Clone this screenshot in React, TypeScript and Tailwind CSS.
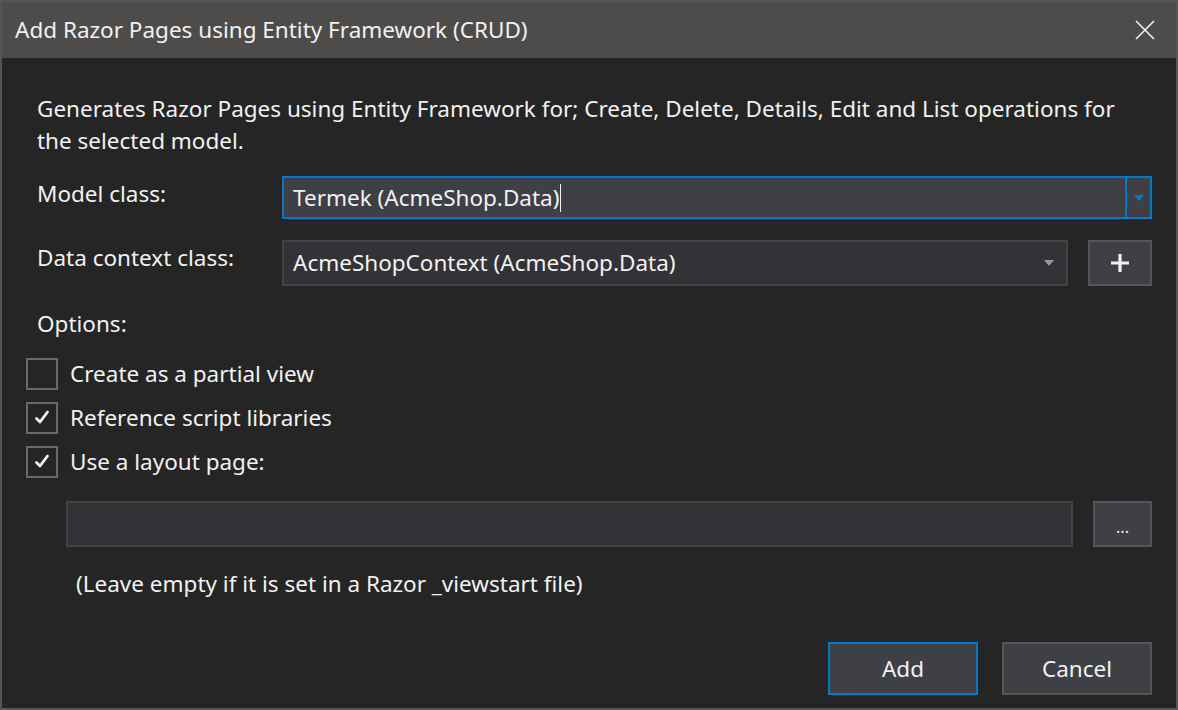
import React from "react";

const font = { fontFamily: '"Noto Sans", "Open Sans", sans-serif' };

function CheckRow({ checked, label }: { checked: boolean; label: string }) {
  return (
    <div className="flex h-[44px] items-center">
      <div className="flex h-[32px] w-[32px] items-center justify-center border-2 border-[#6a6a6a] bg-[#252526]">
        {checked && (
          <svg width="18" height="18" viewBox="0 0 18 18">
            <path d="M3.5 9.5 L7 13 L14.5 3" stroke="#f1f1f1" strokeWidth="2.8" fill="none" strokeLinecap="round" strokeLinejoin="round" />
          </svg>
        )}
      </div>
      <span className="ml-[12px] text-[22.5px] leading-[30px] text-[#f1f1f1]">{label}</span>
    </div>
  );
}

export default function App() {
  return (
    <div className="flex h-[710px] w-[1178px] flex-col border-2 border-[#555555] bg-[#252526] text-[#f1f1f1]" style={font}>
      {/* Title bar */}
      <div className="flex h-[56px] shrink-0 items-center justify-between bg-[#4d4c4b] pl-[13px] pr-[20px]">
        <span className="text-[22.5px] leading-[30px] text-[#f1f1f1]">Add Razor Pages using Entity Framework (CRUD)</span>
        <svg width="22" height="22" viewBox="0 0 22 22">
          <path d="M2 2 L20 20 M20 2 L2 20" stroke="#f1f1f1" strokeWidth="1.6" />
        </svg>
      </div>

      <div className="flex flex-1 flex-col pl-[24px] pr-[24px]">
        <p className="mt-[35px] pl-[11px] text-[22.5px] leading-[32px]">
          Generates Razor Pages using Entity Framework for; Create, Delete, Details, Edit and List operations for the selected model.
        </p>

        {/* Model class */}
        <div className="mt-[19px] flex items-center">
          <span className="mb-[8px] w-[256px] pl-[11px] text-[22.5px] leading-[30px]">Model class:</span>
          <div className="flex h-[43px] flex-1 border-2 border-[#007acc] bg-[#3f3f46]">
            <div className="flex flex-1 items-center pl-[9px] text-[22.5px] leading-[30px]">
              Termek (AcmeShop.Data)
              <span className="ml-[1px] inline-block h-[28px] w-px bg-[#f1f1f1]" />
            </div>
            <div className="flex w-[25px] items-center justify-center border-l-2 border-[#007acc]">
              <svg width="10" height="6" viewBox="0 0 10 6">
                <path d="M0 0 L10 0 L5 6 Z" fill="#007acc" />
              </svg>
            </div>
          </div>
        </div>

        {/* Data context */}
        <div className="mt-[21px] flex items-center">
          <span className="mb-[10px] w-[256px] pl-[11px] text-[22.5px] leading-[30px]">Data context class:</span>
          <div className="flex h-[46px] flex-1 items-center justify-between border-2 border-[#434346] bg-[#333337] pl-[9px] pr-[12px]">
            <span className="text-[22.5px] leading-[30px]">AcmeShopContext (AcmeShop.Data)</span>
            <svg width="10" height="6" viewBox="0 0 10 6">
              <path d="M0 0 L10 0 L5 6 Z" fill="#999999" />
            </svg>
          </div>
          <div className="ml-[20px] flex h-[46px] w-[64px] items-center justify-center border-2 border-[#555555] bg-[#3f3f46]">
            <svg width="20" height="20" viewBox="0 0 20 20">
              <path d="M10 1 V19 M1 10 H19" stroke="#f1f1f1" strokeWidth="3.2" />
            </svg>
          </div>
        </div>

        <div className="mt-[23px] pl-[11px] text-[22.5px] leading-[30px]">Options:</div>

        <div className="mt-[13px] flex flex-col">
          <CheckRow checked={false} label="Create as a partial view" />
          <CheckRow checked label="Reference script libraries" />
          <CheckRow checked label="Use a layout page:" />
        </div>

        {/* Layout page */}
        <div className="mt-[17px] flex pl-[40px]">
          <div className="h-[46px] flex-1 border-2 border-[#434346] bg-[#333337]" />
          <div className="ml-[20px] flex h-[46px] w-[59px] items-end justify-center border-2 border-[#555555] bg-[#3f3f46] pb-[10px] text-[16px] leading-none">
            ...
          </div>
        </div>

        <p className="mt-[22px] pl-[50px] text-[22.5px] leading-[30px]">(Leave empty if it is set in a Razor _viewstart file)</p>

        <div className="mt-auto mb-[13px] flex justify-end gap-[24px]">
          <button className="h-[53px] w-[150px] border-2 border-[#007acc] bg-[#3f3f46] text-[22.5px] text-[#f1f1f1]">Add</button>
          <button className="h-[53px] w-[150px] border-2 border-[#555555] bg-[#3f3f46] text-[22.5px] text-[#f1f1f1]">Cancel</button>
        </div>
      </div>
    </div>
  );
}
